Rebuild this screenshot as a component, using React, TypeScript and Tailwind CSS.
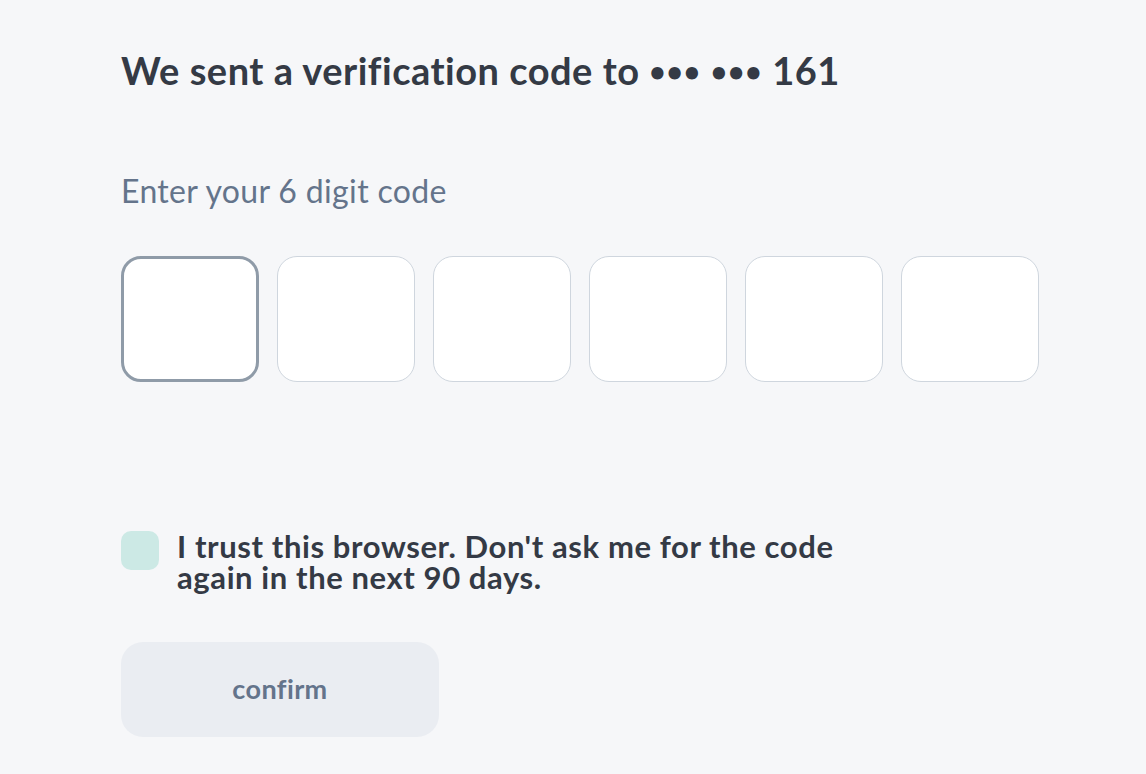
import { useState } from "react";

export default function App() {
  const [digits] = useState(["", "", "", "", "", ""]);
  const [trust, setTrust] = useState(false);

  return (
    <div
      className="min-h-screen bg-[#f6f7f9] text-[#343a45]"
      style={{ fontFamily: "Lato, 'Noto Sans', sans-serif" }}
    >
      <div className="w-[919px] ml-[121px] pt-[44px]">
        <h1 className="text-[38px] font-bold leading-[52px] tracking-[0.5px]">
          We sent a verification code to{" "}
          <span className="text-[28px] align-[3px] tracking-[1px]">•••</span>{" "}
          <span className="text-[28px] align-[3px] tracking-[1px]">•••</span> 161
        </h1>

        <p className="mt-[74px] text-[32px] leading-[40px] tracking-[0.35px] text-[#64748b]">
          Enter your 6 digit code
        </p>

        <div className="mt-[45px] flex gap-[18px]">
          {digits.map((d, i) => (
            <input
              key={i}
              value={d}
              readOnly
              maxLength={1}
              className={
                i === 0
                  ? "w-[138px] h-[126px] rounded-[20px] bg-white border-[3px] border-[#8f9ba8] outline-none"
                  : "w-[138px] h-[126px] rounded-[20px] bg-white border-[1.5px] border-[#cfd6de] outline-none"
              }
            />
          ))}
        </div>

        <label className="mt-[149px] flex items-start gap-[18px] cursor-pointer">
          <button
            type="button"
            onClick={() => setTrust(!trust)}
            className="w-[38px] h-[39px] shrink-0 rounded-[10px] bg-[#cce9e5]"
          />
          <span className="max-w-[700px] text-[31px] font-bold leading-[31px] tracking-[0.6px]">
            I trust this browser. Don't ask me for the code again in the next 90 days.
          </span>
        </label>

        <button className="mt-[49px] w-[318px] h-[95px] rounded-[22px] bg-[#eaedf2] text-[27px] font-bold tracking-[0.4px] text-[#64748b]">
          confirm
        </button>
      </div>
    </div>
  );
}
